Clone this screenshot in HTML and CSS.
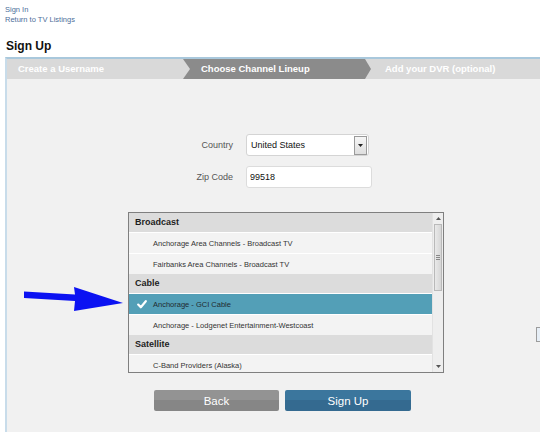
FILE: index.html
```
<!DOCTYPE html>
<html>
<head>
<meta charset="utf-8">
<link rel="stylesheet" href="styles.css">
</head>
<body>
<div class="page">
  <div class="links">
    <a href="#">Sign In</a>
    <a href="#">Return to TV Listings</a>
  </div>
  <h1 class="title">Sign Up</h1>
  <div class="panel">
    <div class="steps">
      <div class="step step-first">Create a Username</div>
      <div class="step step-active">Choose Channel Lineup</div>
      <div class="step step-last">Add your DVR (optional)</div>
    </div>
    <div class="form">
      <label class="label">Country</label>
      <div class="select">
        <span class="select-text">United States</span>
        <span class="select-btn"><svg width="5" height="3" viewBox="0 0 5 3"><path d="M0 0H5L2.5 3Z" fill="#222"/></svg></span>
      </div>
      <label class="label">Zip Code</label>
      <input class="input" type="text" value="99518">
    </div>
    <div class="listbox">
      <div class="list">
        <div class="group">Broadcast</div>
        <div class="item"><span class="check"></span>Anchorage Area Channels - Broadcast TV</div>
        <div class="item"><span class="check"></span>Fairbanks Area Channels - Broadcast TV</div>
        <div class="group">Cable</div>
        <div class="item item-selected"><span class="check"><svg width="10" height="9" viewBox="0 0 10 9"><path d="M1.2 4.6 L3.8 7.3 L8.8 1.2" fill="none" stroke="#fff" stroke-width="2.2" stroke-linecap="round" stroke-linejoin="round"/></svg></span>Anchorage - GCI Cable</div>
        <div class="item"><span class="check"></span>Anchorage - Lodgenet Entertainment-Westcoast</div>
        <div class="group">Satellite</div>
        <div class="item"><span class="check"></span>C-Band Providers (Alaska)</div>
      </div>
      <div class="scrollbar">
        <div class="sb-arrow"><svg width="5" height="3" viewBox="0 0 5 3"><path d="M0 3H5L2.5 0Z" fill="#555"/></svg></div>
        <div class="sb-track">
          <div class="sb-thumb"><span class="grip"></span></div>
        </div>
        <div class="sb-arrow"><svg width="5" height="3" viewBox="0 0 5 3"><path d="M0 0H5L2.5 3Z" fill="#555"/></svg></div>
      </div>
    </div>
    <div class="actions">
      <button class="btn btn-back">Back</button>
      <button class="btn btn-primary">Sign Up</button>
    </div>
    <svg class="annot-arrow" width="102" height="28" viewBox="0 0 102 28">
      <polygon points="0,5.5 51,8.5 50,1 99,17 50,25 51,15 0,12" fill="#0b12f2"/>
    </svg>
    <div class="edge-tab"></div>
  </div>
</div>
</body>
</html>
```
FILE: styles.css
```
html, body {
  margin: 0;
  padding: 0;
  background: #fff;
  overflow: hidden;
}
body {
  font-family: "Liberation Sans", Arial, sans-serif;
  color: #333;
}
.page {
  width: 560px;
  height: 432px;
  position: relative;
}
.links {
  padding: 5px 0 0 5px;
  display: flex;
  flex-direction: column;
  align-items: flex-start;
}
.links a {
  font-size: 7.5px;
  line-height: 10px;
  color: #4d6f9a;
  text-decoration: none;
}
.title {
  margin: 14px 0 4px 6px;
  font-size: 12px;
  line-height: 14px;
  font-weight: bold;
  color: #111;
}
.panel {
  position: relative;
  margin-left: 5px;
  height: 380px;
  background: #f1f1f1;
  border-top: 2px solid #a9c8dc;
  border-left: 2px solid #c8dcea;
}
.steps {
  display: flex;
  height: 20px;
  background: #d9d9d9;
}
.step {
  position: relative;
  font-size: 9.5px;
  font-weight: bold;
  line-height: 20px;
  color: #fff;
  white-space: nowrap;
}
.step-first {
  width: 165px;
  padding-left: 11px;
  background: #d9d9d9;
  z-index: 2;
}
.step-first::after {
  content: "";
  position: absolute;
  right: -7px;
  top: 0;
  border-left: 7px solid #d9d9d9;
  border-top: 10px solid transparent;
  border-bottom: 10px solid transparent;
}
.step-active {
  width: 164px;
  padding-left: 18px;
  background: #8b8b8b;
  z-index: 1;
}
.step-active::after {
  content: "";
  position: absolute;
  right: -6px;
  top: 0;
  border-left: 6px solid #8b8b8b;
  border-top: 10px solid transparent;
  border-bottom: 10px solid transparent;
}
.step-last {
  flex: 1;
  padding-left: 20px;
}
.form {
  display: grid;
  grid-template-columns: 80px 126px;
  column-gap: 13px;
  row-gap: 10px;
  align-items: center;
  margin: 55px 0 0 146px;
}
.label {
  text-align: right;
  font-size: 9px;
  color: #555;
}
.select {
  box-sizing: border-box;
  width: 123px;
  height: 22px;
  background: #fff;
  border: 1px solid #d4d4d4;
  border-radius: 3px;
  display: flex;
  align-items: center;
  justify-content: space-between;
  padding: 0 1px 0 4px;
}
.select-text {
  font-size: 9px;
  color: #111;
}
.select-btn {
  box-sizing: border-box;
  width: 13px;
  height: 19px;
  border: 1px solid #9a9a9a;
  background: linear-gradient(#f6f6f6, #dedede);
  display: flex;
  align-items: center;
  justify-content: center;
}
.input {
  box-sizing: border-box;
  width: 126px;
  height: 22px;
  margin: 0;
  padding: 0 0 0 3px;
  border: 1px solid #dcdcdc;
  border-radius: 3px;
  background: #fff;
  font-family: "Liberation Sans", Arial, sans-serif;
  font-size: 9px;
  color: #111;
  outline: none;
}
.listbox {
  box-sizing: border-box;
  display: flex;
  width: 316px;
  height: 161px;
  margin: 24px 0 0 121px;
  border: 1px solid #7f7f7f;
  background: #f3f3f3;
}
.list {
  flex: 1;
  overflow: hidden;
}
.group {
  height: 19px;
  line-height: 19px;
  padding-left: 6px;
  background: #dcdcdc;
  font-size: 9px;
  font-weight: bold;
  color: #1e1e1e;
}
.item {
  display: flex;
  align-items: center;
  height: 20px;
  border-top: 1px solid #fff;
  padding-left: 8px;
  background: #f3f3f3;
  font-size: 7.5px;
  color: #333;
  white-space: nowrap;
}
.item-selected {
  background: #539fb7;
  color: #1f2a30;
}
.check {
  width: 16px;
  display: flex;
  align-items: center;
}
.scrollbar {
  width: 10px;
  display: flex;
  flex-direction: column;
  background: #eeeeee;
  border-left: 1px solid #e2e2e2;
}
.sb-arrow {
  height: 11px;
  display: flex;
  align-items: center;
  justify-content: center;
}
.sb-track {
  flex: 1;
}
.sb-thumb {
  box-sizing: border-box;
  height: 67px;
  margin: 0 0 0 1px;
  width: 8px;
  border: 1px solid #b9b9b9;
  background: linear-gradient(90deg, #e9e9e9, #d6d6d6);
  display: flex;
  align-items: center;
  justify-content: center;
}
.grip {
  width: 4px;
  height: 5px;
  background: repeating-linear-gradient(#888 0 1px, transparent 1px 2px);
}
.actions {
  display: flex;
  gap: 6px;
  margin: 17px 0 0 147px;
}
.btn {
  height: 21px;
  border: none;
  border-radius: 2px;
  padding: 0;
  font-family: "Liberation Sans", Arial, sans-serif;
  font-size: 11.5px;
  color: #fff;
}
.btn-back {
  width: 125px;
  background: linear-gradient(#939393 0 50%, #868686 50% 100%);
}
.btn-primary {
  width: 126px;
  background: linear-gradient(#3b769d 0 50%, #346a90 50% 100%);
}
.annot-arrow {
  position: absolute;
  left: 17px;
  top: 227px;
}
.edge-tab {
  position: absolute;
  left: 529px;
  top: 268px;
  width: 10px;
  height: 13px;
  border: 1px solid #9c9c9c;
  background: #e6eef6;
}
```
